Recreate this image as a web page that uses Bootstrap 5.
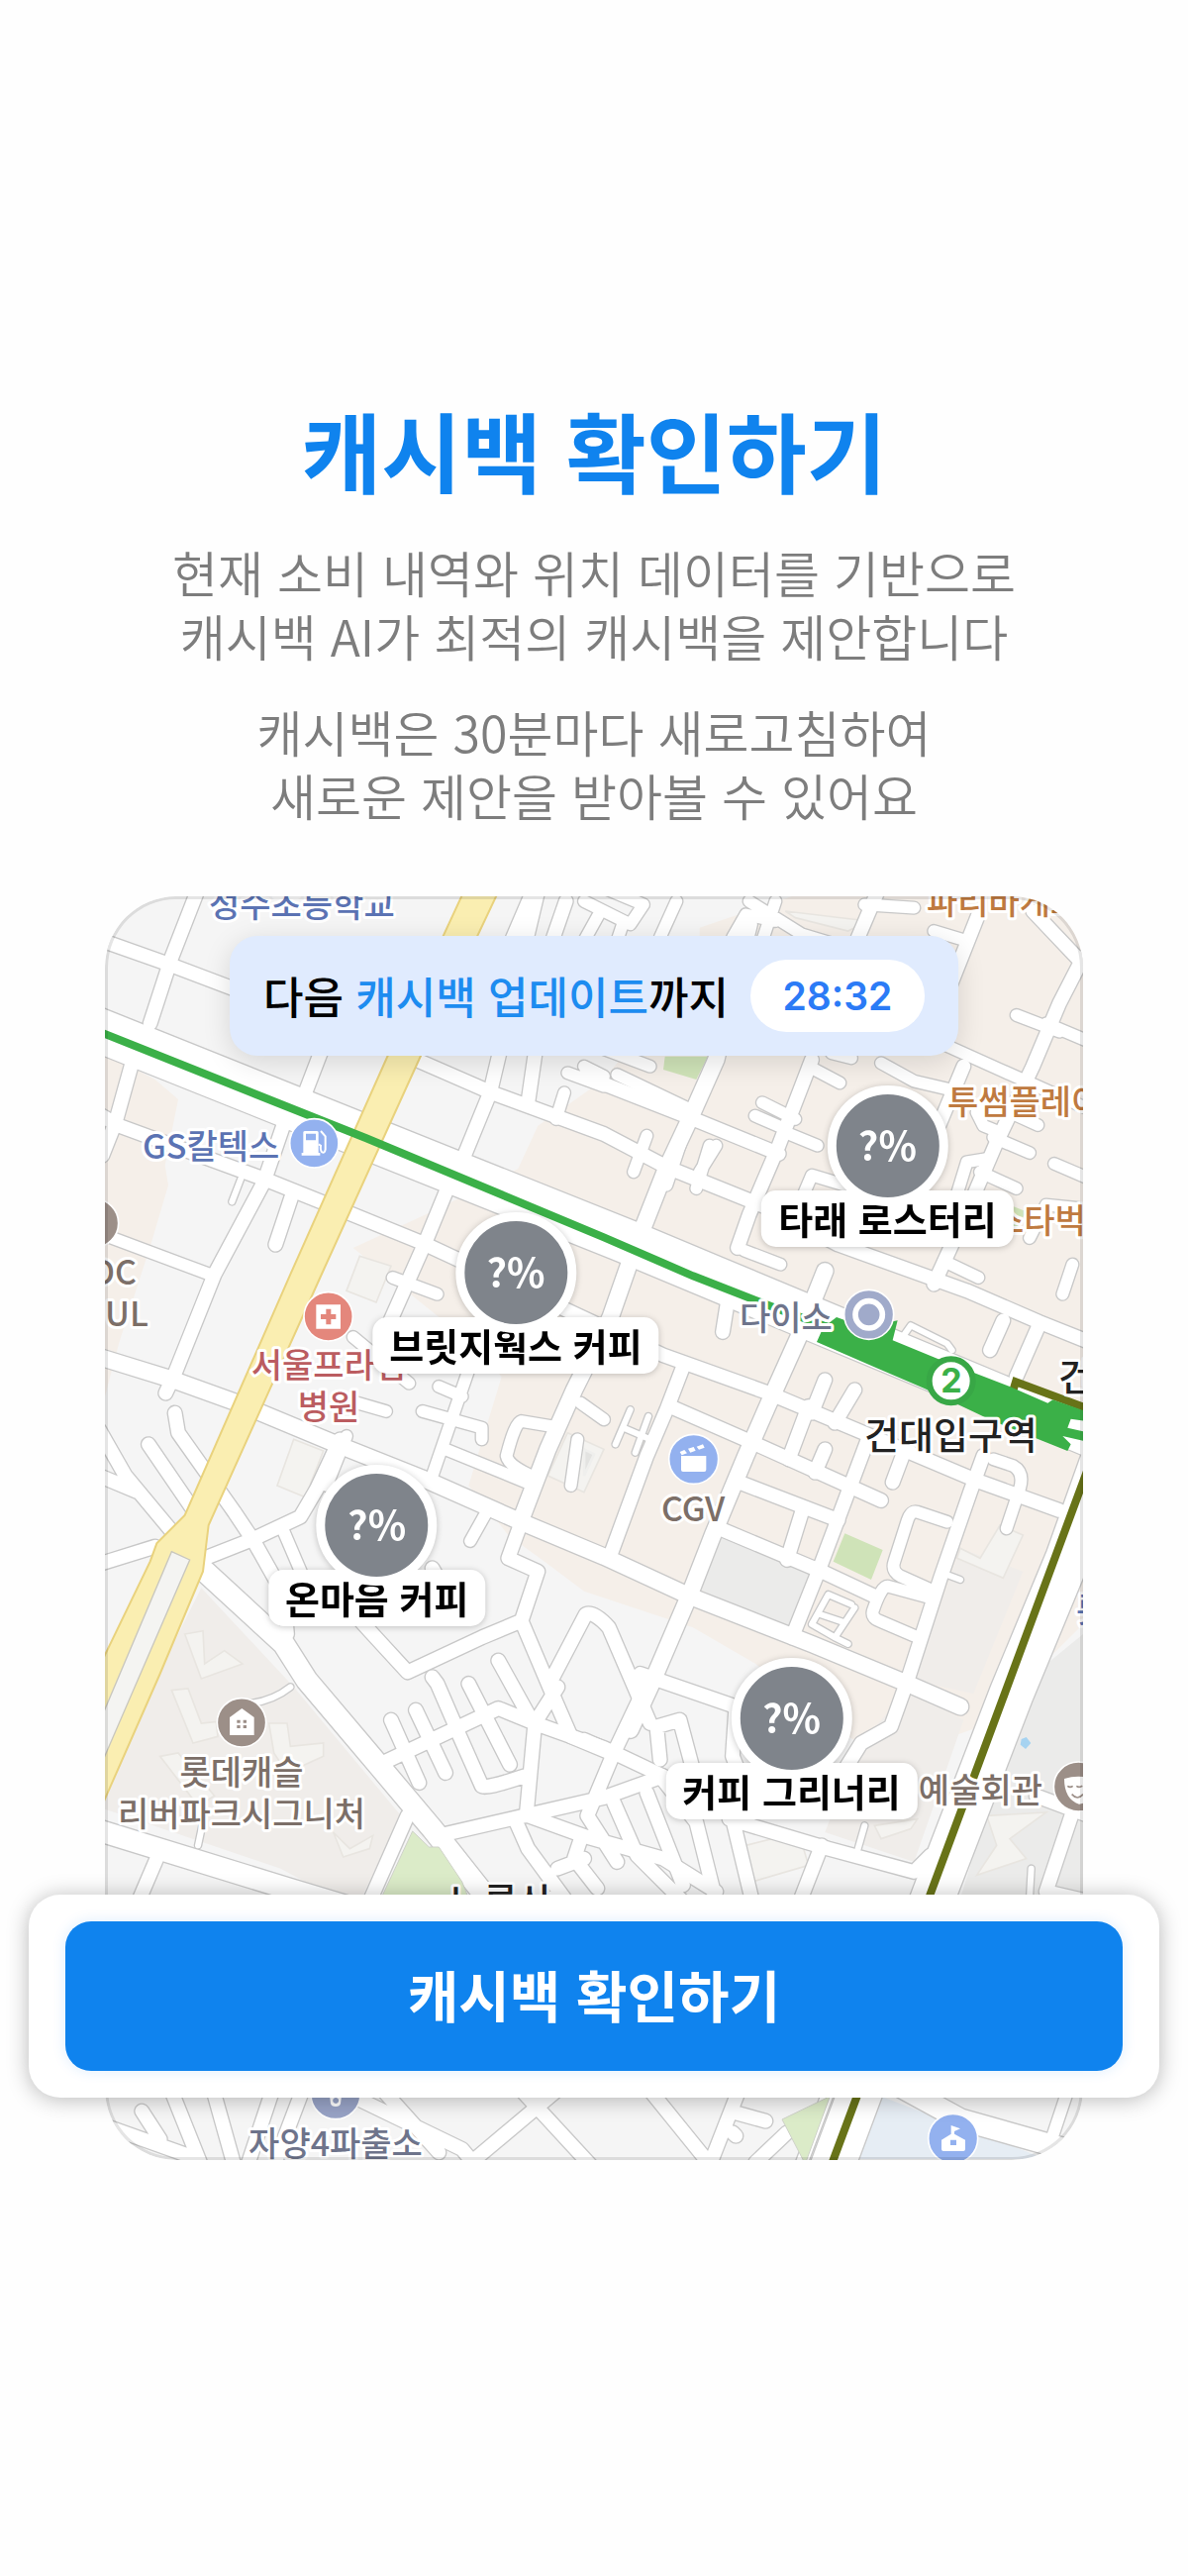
<!DOCTYPE html>
<html lang="ko">
<head>
<meta charset="utf-8">
<meta name="viewport" content="width=device-width, initial-scale=1">
<title>캐시백 확인하기</title>
<link href="https://cdn.jsdelivr.net/npm/bootstrap@5.3.0/dist/css/bootstrap.min.css" rel="stylesheet">
<style>
  :root { --brand: #0f83ee; }
  body { font-family: "Noto Sans CJK KR", "Noto Sans", sans-serif; background: #fefefe; color: #000; }
  .screen { padding: 397px 29px 420px; }
  .screen-title { font-size: 88px; line-height: 112px; font-weight: 700; color: var(--brand); margin-bottom: 36px; }
  .intro { font-size: 50px; line-height: 64px; font-weight: 350; color: #7d7d7d; margin-bottom: 33px; }
  .stage { margin-top: 71px; }
  .map-card { max-width: 988px; border-radius: 72px; overflow: hidden; background: #f5f5f5; }
  .map-card::after { content: ""; position: absolute; inset: 0; border-radius: inherit; box-shadow: inset 0 0 0 3px rgba(0,0,0,.1); pointer-events: none; }
  .map-card > svg { display: block; width: 100%; height: auto; }

  .streets { fill: none; stroke-linejoin: round; stroke-linecap: round; }
  .streets path { stroke-width: calc(var(--w) + var(--edge)); }
  .casing { --edge: 8px; stroke: #c8c8c8; }
  .surface { --edge: 0px; stroke: #fff; }
  .s16 { --w: 18px; } .s36 { --w: 35px; } .s42 { --w: 41px; } .s50 { --w: 49px; } .s64 { --w: 64px; } .s130 { --w: 132px; }

  .place { font-size: 34px; font-weight: 500; paint-order: stroke; stroke: #fff; stroke-width: 6px; stroke-linejoin: round; }
  .place-blue { fill: #5b73b3; } .place-orange { fill: #bf7a40; } .place-brown { fill: #7c6f68; }
  .place-red { fill: #bb5c60; } .place-slate { fill: #6e748b; }
  .place-station { font-size: 38px; fill: #222; }

  .notice { top: 40px; left: 50%; transform: translateX(-50%); padding: 24px 34px; gap: 22px; border-radius: 28px; background: #e0ebfe; box-shadow: 0 6px 28px rgba(0,0,0,.13); font-size: 44px; line-height: 73px; font-weight: 500; white-space: nowrap; z-index: 3; }
  .notice-key { color: #1d8cf0; }
  .timer { width: 176px; background: #fff; color: #2b7bf6; font-family: Inter, "Noto Sans", sans-serif; font-size: 39px; font-weight: 600; }

  .pin { transform: translateX(-50%); filter: drop-shadow(0 1px 3px rgba(0,0,0,.22)); z-index: 2; }
  .pin-rate { width: 122px; height: 122px; padding-bottom: 4px; border: 9px solid #fff; background: #7f848b; color: #fff; font-size: 40px; font-weight: 700; z-index: 1; }
  .pin-name { margin-top: -16px; padding: 0 17px 2px; border-radius: 15px; background: #fff; font-size: 38px; line-height: 55px; font-weight: 700; white-space: nowrap; }

  .action-bar { left: 0; right: 0; bottom: 63px; padding: 27px 37px; border-radius: 32px; background: #fff; box-shadow: 0 2px 22px rgba(0,0,0,.28); z-index: 5; }
  .cta { height: 151px; padding: 0 0 6px; border: 0; border-radius: 26px; background: var(--brand); color: #fff; font-size: 56px; font-weight: 700; box-shadow: 0 0 14px rgba(15,131,238,.14); }
  .cta:hover { background: #0b74d6; color: #fff; }
</style>
<script src="https://cdn.jsdelivr.net/npm/bootstrap@5.3.0/dist/js/bootstrap.bundle.min.js"></script>
</head>
<body>
<main class="screen d-flex flex-column min-vh-100">
  <header class="text-center">
    <h1 class="screen-title">캐시백 확인하기</h1>
    <p class="intro">현재 소비 내역와 위치 데이터를 기반으로<br>캐시백 AI가 최적의 캐시백을 제안합니다</p>
    <p class="intro mb-0">캐시백은 30분마다 새로고침하여<br>새로운 제안을 받아볼 수 있어요</p>
  </header>

  <section class="stage position-relative">
    <div class="map-card position-relative w-100 mx-auto">
      <svg viewBox="106 905 988 1276" role="img" aria-label="건대입구역 주변 지도">
        <defs>
          <g id="streets" class="streets">
            <!-- avenues -->
            <path class="s130" d="M20 447L1640 1095L2160 1312L3080 1695"/>
            <path class="s130" d="M3090 1700L2965 2050L2795 2460L2560 3070L2250 3900"/>
            <path class="s64" d="M340 2080L590 2310L660 2420L880 2680L1040 2870L1230 3110"/>
            <path class="s64" d="M30 2875L600 3050L900 3140"/>
            <!-- cross streets -->
            <path class="s42" d="M30 176L240 250L900 500L1220 640L1560 765L1750 865L2060 990L2270 1100L2660 1240L2880 1335L3030 1395"/>
            <path class="s42" d="M1500 590L1820 715L2090 825M30 705L90 740L540 905L740 985L1010 1095L1740 1435L2060 1550L2370 1680L2690 1815L2940 1905"/>
            <path class="s36" d="M30 1065L370 1192M1540 500L1700 560M1600 585L1820 690"/>
            <path class="s50" d="M30 1440L250 1508L450 1580L750 1705L1020 1812L1320 1945L1560 2045L1820 2165L2190 2310L2480 2430L2640 2500"/>
            <path class="s42" d="M1760 1590L2000 1695L2300 1830L2400 1875M1970 1820L2270 1935M1910 1960L2220 2090L2380 2165"/>
            <path class="s36" d="M2560 480L2760 570L3030 690M2900 430L3030 485M2810 405L2940 455M2110 760L2207 800M2180 560L2275 610M2040 670L2140 720M2018 710L2110 750M1985 1118L2095 1160"/>
            <path class="s36" d="M2700 880L2810 930M2740 775L2850 822M2770 690L2875 738M2925 855L3030 900M2590 1150L2695 1200M2400 550L2500 605L2650 640M2300 490L2310 535L2250 520M2740 660L2690 700L2710 740L2760 760"/>
            <!-- down streets -->
            <path class="s42" d="M328 30L250 230L185 430M130 550L80 730L40 830M705 510L655 640M590 735L530 910L380 1190L260 1490L232 1550M615 950L565 1100"/>
            <path class="s42" d="M1360 30L1215 640L1125 860M1340 40L1280 180M1090 920L1020 1090L900 1360M1445 60L1400 190L1330 670"/>
            <path class="s50" d="M2000 130L1900 540L1820 720L1745 880L1670 1070M2230 1180L2150 1380L2060 1580L1990 1740L1890 1980L1820 2160L1700 2440L1640 2570M1650 1120L1580 1320L1470 1540L1390 1720L1310 1930"/>
            <path class="s42" d="M2190 540L2090 800L2000 1010L1965 1110M2390 30L2330 170M2695 100L2600 340M2650 560L2550 800M3012 230L2940 370L2860 560L2750 790L2660 1000L2560 1220M2860 90L3012 250"/>
            <path class="s42" d="M1800 1470L1750 1600L1690 1740L1580 2040M2360 1690L2300 1850L2210 2090L2130 2290M2180 1590L2120 1750M2160 1910L2115 2055M2880 1340L2810 1500M2770 1330L2730 1420"/>
            <path class="s42" d="M2710 1740L2670 1850L2580 2110L2480 2420L2430 2560L2340 2610L2290 2690M2320 1540L2260 1640M2230 1510L2190 1610M2230 1720L2200 1790M2465 1740L2435 1820M1940 1240L1920 1365"/>
            <path class="s36" d="M2740 1750L2800 1770Q2835 1790 2820 1840L2780 1960M2600 1940L2510 1910Q2490 1905 2480 1935L2440 2060Q2430 2090 2460 2105L2560 2150M2550 2170L2420 2135Q2400 2135 2375 2210Q2370 2230 2395 2240L2500 2285"/>
            <path class="s36" d="M1500 60L1640 130L1680 70L1560 20M1550 90L1500 180M1780 60L1730 170M1950 170L1990 100L2080 120M2080 60L2040 180M2000 60L2160 160L2260 190M2350 70L2500 80M2560 150L2660 180M1620 120L1600 180"/>
            <path class="s36" d="M1450 580L1560 620M1440 640L1415 720M1500 560L1560 590M1690 770L1650 880M1800 770L1750 920M1880 800L1840 930M1900 800L1850 880M2160 960L2190 890L2290 920M2620 980L2660 850L2720 840M2850 1080L2900 980L3000 990M2980 1160L2950 1250"/>
            <!-- west quarter -->
            <path class="s42" d="M30 2068L200 2015M30 1660L110 1800L260 1980M30 1800L150 1850M180 1705L320 1910M260 1610L270 1670L440 1910L500 2000M350 2050L490 1995L640 1925L690 1840L760 1690M500 2000L590 2160L600 2280"/>
            <path class="s36" d="M590 1970L650 2110M780 1680L720 1830M1210 1900L1155 1998M1080 1720L1350 1830M1400 1650L1310 1635Q1290 1640 1265 1740Q1270 1770 1350 1805M1010 1605L1190 1655L1190 1690M1060 1530L1130 1560M1150 1480L1040 1800M780 1570L900 1605M800 1380L970 1520M1480 1690L1460 1830M1490 1580L1560 1630M920 1200L1055 1250"/>
            <path class="s42" d="M760 2170L850 2270L965 2395L1190 2290L1310 2240M1310 1940L1270 2050L1360 2090L1310 2240L1395 2440L1460 2590L1580 2640M1395 2430L1505 2220Q1530 2210 1575 2260L1700 2550M1040 2080L1080 2150"/>
            <path class="s42" d="M890 2670L1240 2505L1350 2550L1560 2625L1740 2710M915 2540L1000 2730M990 2510L1080 2700M1055 2430L1120 2580M1150 2430L1275 2675M1110 2560L1190 2740Q1200 2750 1320 2710M1350 2560L1325 2830M1240 2360L1340 2540M1420 2440L1350 2550M1055 2430L1040 2410"/>
            <path class="s42" d="M1060 2890L1320 2830L1560 2775L1740 2710M1290 2840L1330 2930L1440 3080M1330 2830L1510 2895L1740 2960L1900 3060M1490 2900L1470 2960L1540 3050M1420 2990L1500 2960M1500 2600L1590 2640L1690 2430L1670 2400L1960 2500M1590 2640L1510 2830L1600 2970"/>
            <path class="s42" d="M205 2960L145 3100M965 2830L850 3090M1590 2790L1660 2950L1800 3090M1690 2760L1800 3040M1730 2710L1840 2850L1900 3090M1950 2840L2010 3090M1960 2500L1950 2650L1990 2750M1940 2840L2240 2930L2500 3000L2550 2950M2220 2920L2150 3100M2870 2770L3030 2830M2980 2820L2900 3060L3030 3090M1730 2660L1720 2560L1790 2540L1830 2690"/>
            <!-- south strip -->
            <path class="s42" d="M240 3640L340 3890M370 3640L440 3890M560 3650L480 3890M640 3680L560 3890M820 3690L1130 3840L1180 3900M1290 3640L1530 3900M1420 3660L1170 3870M160 3725L215 3810M50 3770L330 3870M880 3650L1060 3850M1690 3650L1860 3860M1970 3660L1880 3890M1960 3730L2050 3755M2115 3790L2020 3880M1950 3790L1960 3800"/>
            <path class="s64" d="M2420 3630L2640 3750L3030 3860"/>
            <path class="s36" d="M2960 3680L2920 3800M2250 3640L2160 3880"/>
            <path class="s16" d="M460 900L433 970M2465 1380L2490 1345L2600 1400L2615 1420M1640 1600L1595 1705M1695 1620L1655 1730M1620 1655L1700 1690M2310 2190L2240 2160L2190 2250L2260 2290L2320 2200M2260 2290L2300 2310M2215 2220L2290 2245M2600 2100L2640 2115M2350 2860L2330 2930M2850 3080L2855 2990M610 2440Q560 2480 490 2490M345 2850L330 2920"/>
          </g>
        </defs>

        <g transform="translate(90 890) scale(.33333)">
          <!-- land use -->
          <path fill="#f5efe9" d="M1850 140L2130 45H3012V2250L2700 2560L2420 2660L2250 2560L2020 2370L1830 2260L1500 2150L1380 2060L1270 1980L1150 1830L1250 1500L1160 1400L800 1110L1040 1000L1300 870L1360 740L1560 600L1640 500L1850 400ZM48 520L200 600L270 660L230 860L240 920L190 1090L90 1400L48 1560Z"/>
          <path fill="#f0edea" d="M340 2140L620 2440L945 2830L830 3070H730L580 2990L48 2810V2770L210 2400ZM2640 2020L2830 2090L2680 2460L2500 2420ZM2480 2450L2650 2540L2500 2970L2230 2880L2330 2620Z"/>
          <path fill="#ebebea" d="M1920 1980L2190 2095L2120 2265L1850 2145ZM2890 2380L3012 2280V3080H2640L2720 2820Z"/>
          <path fill="#cfe3b8" d="M2290 1975L2405 2025L2370 2115L2255 2060ZM1745 530H1875L1840 600L1740 570ZM2790 980L2840 1000L2800 1070Z"/>
          <path fill="#e6edf4" d="M2400 3680L2900 3870H2330Z"/>
          <path fill="#f4f3f0" stroke="#e8e5e0" stroke-width="5" d="M620 1690L710 1725L655 1865L570 1830ZM820 1135L915 1165L870 1275L780 1240ZM290 2280L345 2270L350 2370L410 2330L465 2370L340 2415ZM250 2450L300 2445L340 2550L385 2545L390 2590L315 2610ZM545 2550L600 2550L610 2620L710 2610V2650L600 2700L560 2640ZM215 2650L270 2640L380 2770L330 2800ZM740 2880L790 2930L860 2890L850 2930L770 2955ZM1450 1670L1560 1720L1500 1850L1390 1800ZM2640 2020L2700 2050L2760 1950L2830 1980L2770 2110L2630 2050ZM2380 2860L2510 2840L2490 2870L2400 2900ZM1990 2920L2150 2880L2180 2980L2010 3030ZM2720 2830L2900 2820L2790 2900L2840 2960L2690 3010L2750 2920ZM2110 90L2360 120L2300 150L2140 110Z"/>
          <path fill="#e3e3e1" stroke="#efefed" stroke-width="8" d="M1500 1720L1530 1735L1500 1800Z"/>
          <path fill="#a6d3f1" d="M2825 2598L2840 2592L2854 2610L2838 2628L2822 2615Z"/>

          <use href="#streets" class="casing"/>
          <use href="#streets" class="surface"/>

          <path fill="#dbebc8" stroke="#cfd2c9" stroke-width="3" d="M980 2877L1030 2925H1060L1130 3030L1150 3080H885ZM2100 3750L2245 3680L2170 3885Z"/>
          <!-- trunk road -->
          <path fill="#faeeb1" stroke="#e9d27d" stroke-width="6" d="M1145 10L905 528L610 1190L290 1920L205 2005L185 2060L30 2380V2820L215 2400L345 2090L362 1950L700 1200L1005 528L1250 10Z"/>
          <path fill="#f4f4f2" stroke="#c9c7be" stroke-width="4" d="M250 2030L305 2055L30 2690V2550Z"/>
          <!-- rail lines -->
          <path fill="none" stroke="#3bb048" stroke-width="24" d="M30 455L840 778L1560 1078L1830 1195L2100 1300L2300 1370"/>
          <path fill="none" stroke="#687318" stroke-width="24" d="M3030 1770L2795 2405L2550 3065L2325 3685L2245 3900M2793 1565L2808 1516L3030 1598"/>
          <path fill="#3bb048" d="M2265 1320L2350 1350L2450 1330L2435 1390L2570 1445L2790 1530L2905 1580L2920 1570L3020 1605V1635L2975 1628L2965 1655L3020 1668V1696L2950 1680L2975 1705L2965 1725L2740 1635L2530 1535L2390 1475L2205 1395L2225 1350Z"/>
          <circle cx="2612" cy="1513" r="66" fill="#fff" stroke="#38a746" stroke-width="18"/>

          <!-- place icons -->
          <g stroke="#fff" stroke-width="5">
            <circle cx="682" cy="793" r="74" fill="#93b1ef"/>
            <circle cx="725" cy="1318" r="74" fill="#e4877c"/>
            <circle cx="462" cy="2548" r="74" fill="#9c8f88"/>
            <circle cx="1832" cy="1750" r="75" fill="#93b1ef"/>
            <circle cx="2363" cy="1312" r="75" fill="#a0aaca"/>
            <circle cx="2998" cy="2742" r="75" fill="#9c8f88"/>
            <circle cx="2618" cy="3808" r="75" fill="#93b1ef"/>
            <circle cx="747" cy="3674" r="75" fill="#98a3c6"/>
            <circle cx="15" cy="1035" r="74" fill="#9c8f88"/>
          </g>
          <path fill="#fff" fill-rule="evenodd" d="M649 760Q649 756 655 756H689Q695 756 695 760V822H700V830H644V822H649ZM657 764V784H687V764Z"/>
          <path fill="none" stroke="#fff" stroke-width="6" d="M702 756L716 772V812Q714 824 706 820Q700 816 702 800L695 796"/>
          <path fill="#fff" fill-rule="evenodd" d="M688 1282H762V1355H688ZM718 1295V1311H702V1326H718V1342H733V1326H748V1311H733V1295Z"/>
          <path fill="#fff" d="M463 2505L500 2532V2586H426V2532Z"/>
          <path fill="#9c8f88" d="M448 2540h10v9h-10zM467 2540h10v9h-10zM448 2556h10v9h-10zM467 2556h10v9h-10z"/>
          <path fill="#fff" d="M1794 1740H1870V1782Q1870 1788 1864 1788H1800Q1794 1788 1794 1782ZM1790 1728L1804 1722L1812 1732L1796 1738ZM1815 1718L1832 1713L1838 1724L1822 1730ZM1841 1712L1860 1705L1865 1715L1848 1721Z"/>
          <circle cx="2363" cy="1312" r="41" fill="none" stroke="#fff" stroke-width="17"/>
          <path fill="#fff" d="M2955 2718Q2998 2705 3040 2718Q3045 2790 3000 2795Q2955 2780 2955 2718Z"/>
          <path fill="none" stroke="#9c8f88" stroke-width="5" d="M2965 2740Q2973 2746 2981 2740M2992 2740Q3000 2746 3010 2740M2978 2765Q2995 2785 3012 2765"/>
          <path fill="#fff" fill-rule="evenodd" d="M2612 3768L2640 3778L2622 3786V3794L2655 3812V3840Q2655 3846 2649 3846H2589Q2583 3846 2583 3840V3812L2612 3794ZM2610 3812V3828H2628V3812Z"/>
          <path fill="#fff" fill-rule="evenodd" d="M724 3640H770L762 3702Q760 3711 747 3711Q734 3711 732 3702ZM747 3684A9 9 0 1 0 748 3684Z"/>
        </g>

        <!-- place names -->
        <g class="place">
          <g class="place-blue">
            <text x="211" y="926">성수초등학교</text>
            <text x="144" y="1170">GS칼텍스</text>
            <text x="1087" y="1638">롯데</text>
          </g>
          <g class="place-orange">
            <text x="936" y="923">파리바게뜨</text>
            <text x="957" y="1125">투썸플레이스</text>
            <text x="1003" y="1245">스타벅스</text>
          </g>
          <g class="place-brown">
            <text x="138" y="1297" text-anchor="end">DC</text>
            <text x="150" y="1339" text-anchor="end">SEOUL</text>
            <text x="668" y="1536">CGV</text>
            <text x="244" y="1802" text-anchor="middle">롯데캐슬</text>
            <text x="244" y="1844" text-anchor="middle">리버파크시그니처</text>
            <text x="1053" y="1820" text-anchor="end">·예술회관</text>
          </g>
          <g class="place-red" text-anchor="middle">
            <text x="332" y="1391">서울프라임</text>
            <text x="332" y="1433">병원</text>
          </g>
          <g class="place-slate">
            <text x="747" y="1343">다이소</text>
            <text x="339" y="2177" text-anchor="middle">자양4파출소</text>
          </g>
          <g class="place-station">
            <text x="873" y="1463">건대입구역</text>
            <text x="1069" y="1404">건대입구</text>
            <text x="453" y="1934">노룬산</text>
          </g>
        </g>
        <text x="961" y="1406" text-anchor="middle" font-family="Inter, sans-serif" font-size="34" font-weight="700" fill="#3bb048">2</text>
      </svg>

      <div class="notice position-absolute d-flex align-items-center">
        <span>다음 <span class="notice-key">캐시백 업데이트</span>까지</span>
        <span class="timer rounded-pill text-center">28:32</span>
      </div>

      <div class="pin position-absolute d-flex flex-column align-items-center" style="left:80%;top:15%">
        <span class="pin-rate rounded-circle position-relative d-flex align-items-center justify-content-center">?%</span>
        <span class="pin-name">타래 로스터리</span>
      </div>
      <div class="pin position-absolute d-flex flex-column align-items-center" style="left:42%;top:25%">
        <span class="pin-rate rounded-circle position-relative d-flex align-items-center justify-content-center">?%</span>
        <span class="pin-name">브릿지웍스 커피</span>
      </div>
      <div class="pin position-absolute d-flex flex-column align-items-center" style="left:27.8%;top:45%">
        <span class="pin-rate rounded-circle position-relative d-flex align-items-center justify-content-center">?%</span>
        <span class="pin-name">온마음 커피</span>
      </div>
      <div class="pin position-absolute d-flex flex-column align-items-center" style="left:70.2%;top:60.3%">
        <span class="pin-rate rounded-circle position-relative d-flex align-items-center justify-content-center">?%</span>
        <span class="pin-name">커피 그리너리</span>
      </div>
    </div>

    <div class="action-bar position-absolute">
      <button type="button" class="btn cta w-100">캐시백 확인하기</button>
    </div>
  </section>
</main>
</body>
</html>
